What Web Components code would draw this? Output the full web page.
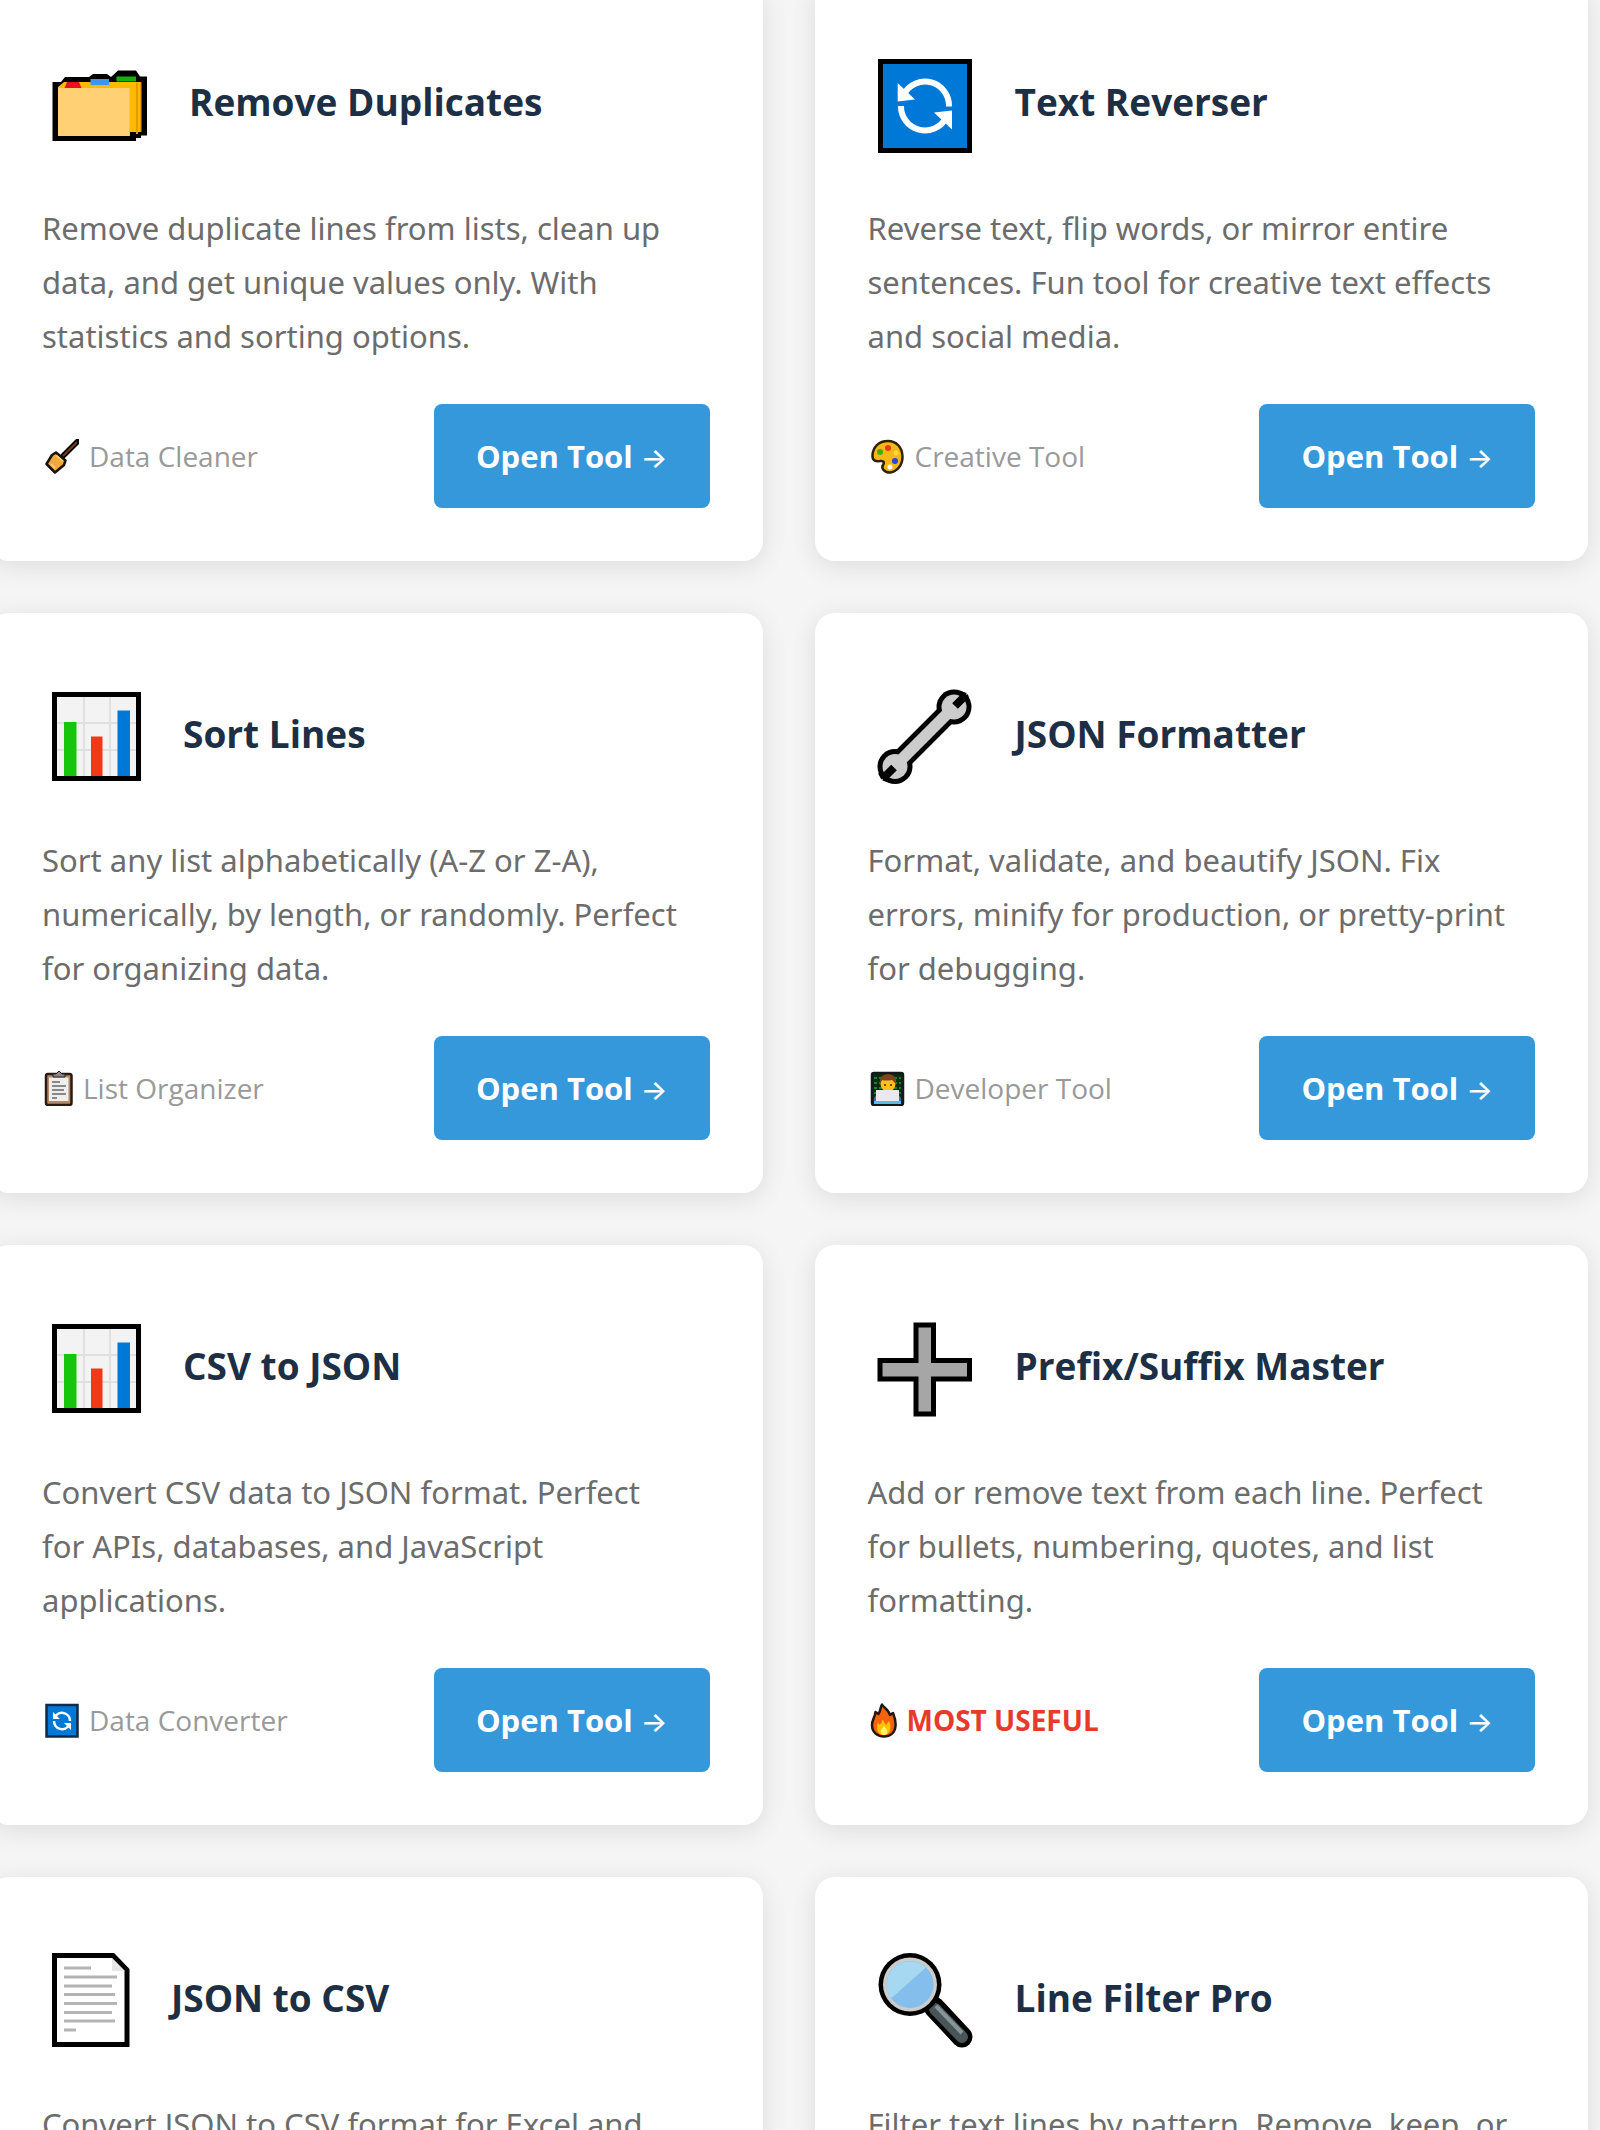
<!DOCTYPE html>
<html lang="en">
<head>
<meta charset="utf-8">
<title>Text Tools</title>
<style>
  html, body { height: 100%; margin: 0; }
  body {
    overflow: hidden;
    background: #f5f5f5;
    font-family: "Open Sans", "Noto Sans", sans-serif;
  }
</style>
</head>
<body>
<tool-grid>
  <tool-card icon="folder" href="#remove-duplicates">
    <span slot="title">Remove Duplicates</span>
    Remove duplicate lines from lists, clean up data, and get unique values only. With statistics and sorting options.
    <tool-tag slot="tag" icon="broom">Data Cleaner</tool-tag>
  </tool-card>
  <tool-card icon="refresh" href="#text-reverser">
    <span slot="title">Text Reverser</span>
    Reverse text, flip words, or mirror entire sentences. Fun tool for creative text effects and social media.
    <tool-tag slot="tag" icon="palette">Creative Tool</tool-tag>
  </tool-card>
  <tool-card icon="chart" href="#sort-lines">
    <span slot="title">Sort Lines</span>
    Sort any list alphabetically (A-Z or Z-A), numerically, by length, or randomly. Perfect for organizing data.
    <tool-tag slot="tag" icon="clipboard">List Organizer</tool-tag>
  </tool-card>
  <tool-card icon="wrench" href="#json-formatter">
    <span slot="title">JSON Formatter</span>
    Format, validate, and beautify JSON. Fix errors, minify for production, or pretty-print for debugging.
    <tool-tag slot="tag" icon="developer">Developer Tool</tool-tag>
  </tool-card>
  <tool-card icon="chart" href="#csv-to-json">
    <span slot="title">CSV to JSON</span>
    Convert CSV data to JSON format. Perfect for APIs, databases, and JavaScript applications.
    <tool-tag slot="tag" icon="refreshSmall">Data Converter</tool-tag>
  </tool-card>
  <tool-card icon="plus" href="#prefix-suffix">
    <span slot="title">Prefix/Suffix Master</span>
    Add or remove text from each line. Perfect for bullets, numbering, quotes, and list formatting.
    <tool-tag slot="tag" icon="fire" hot>MOST USEFUL</tool-tag>
  </tool-card>
  <tool-card icon="page">
    <span slot="title">JSON to CSV</span>
    Convert JSON to CSV format for Excel and
  </tool-card>
  <tool-card icon="magnifier">
    <span slot="title">Line Filter Pro</span>
    Filter text lines by pattern. Remove, keep, or
  </tool-card>
</tool-grid>

<script>
// each entry: [width, height, markup]
const icons = {
  folder: [115, 96, `
    <path d="M10.5 25H19L23 20H47L51 17H65L69 20L76 13.5H94L98 19.5H105V78.5H99V81H94V84H10.5Z" fill="#000"/>
    <path d="M22 25H99V75H88V79H16V30Z" fill="#ffb900"/>
    <path d="M94 26H96V77H94M98 25H99.500V75H98" fill="#e69a00"/>
    <path d="M16 31H87.500V79H16Z" fill="#ffd174"/>
    <path d="M25 25H37L39.500 31H22.500Z" fill="#e81224"/>
    <path d="M48.500 22H67V28H48.500Z" fill="#3a96e8"/>
    <path d="M74.500 19.500H94V24.500H74.500Z" fill="#13b10b"/>`],
  refresh: [115, 96, `
    <rect x="12.500" y="4.500" width="89" height="89" fill="#0078d7" stroke="#000" stroke-width="5"/>
    <g fill="none" stroke="#fff" stroke-width="6">
      <path d="M81 49.500A24 24 0 0 0 36 37"/><path d="M33 49A24 24 0 0 0 78 61"/>
    </g>
    <path d="M29.700 26V44.500L47 42.500ZM84 72.500V53.500L66 55.500Z" fill="#fff"/>`],
  chart: [109, 96, `
    <rect x="12.500" y="5.500" width="84" height="84" fill="#f3f3f3" stroke="#000" stroke-width="5"/>
    <path d="M42 8V87M68 8V87M15 34H94M15 61H94" stroke="#e0e0e0" stroke-width="2"/>
    <path d="M22 33H34.500V87H22Z" fill="#16c60c"/>
    <path d="M49 47.500H60.500V87H49Z" fill="#f03a17"/>
    <path d="M75.500 21.500H88V87H75.500Z" fill="#0078d7"/>`],
  wrench: [115, 96, `
    <path d="M28 76L85 19" stroke="#000" stroke-width="21"/>
    <circle cx="86" cy="18" r="17.500"/><circle cx="27" cy="77.500" r="17.500"/>
    <path d="M28 76L85 19" stroke="#ccc" stroke-width="11.500"/>
    <circle cx="86" cy="18" r="12.500" fill="#ccc"/><circle cx="27" cy="77.500" r="12.500" fill="#ccc"/>
    <path d="M87 17L98 6M26 78.500L15 89.500" stroke="#000" stroke-width="8"/>
    <path d="M98 6L92 4M98 6L100 12M15 89.500L21 91.500M15 89.500L12 83.500" stroke="#000" stroke-width="4"/>`],
  plus: [115, 96, `
    <path d="M48 4H65.500V39.500H101.500V58H65.500V93H48V58H12V39.500H48Z" fill="#a6a6a6" stroke="#000" stroke-width="5"/>`],
  page: [97, 96, `
    <path d="M12.500 2.500H71L85 17V91.500H12.500Z" fill="#fff" stroke="#000" stroke-width="5"/>
    <path d="M70 5V18H83Z" fill="#e6e6e6"/>
    <path d="M22 15H49M22 24H75M22 33H70M22 41.500H73M22 50.500H75M22 59.500H70M22 68H73M22 77H34" stroke="#b4b4b4" stroke-width="3"/>`],
  magnifier: [115, 96, `
    <path d="M66 54L94 84" stroke="#000" stroke-width="21" stroke-linecap="round"/>
    <path d="M67 56L94 84" stroke="#4a5558" stroke-width="12" stroke-linecap="round"/>
    <path d="M68 53L94 80" stroke="#859598" stroke-width="4"/>
    <circle cx="42" cy="31.500" r="31.500"/><circle cx="42" cy="31.500" r="27" fill="#ccc"/>
    <circle cx="42" cy="31.500" r="23.500" fill="#83beec"/>
    <path d="M23 45.500A23.500 23.500 0 0 1 58 14.500Z" fill="#a6d8f2"/>`],
  broom: [37, 35, `
    <path d="M36 2L21 17" stroke="#000" stroke-width="5.500" stroke-linecap="round"/>
    <path d="M35 3L21 17" stroke="#7a3b14" stroke-width="2"/>
    <path d="M14 13.500L23.500 21.500L22 26L13 33.500L4.500 25L10 16Z" fill="#f2a93b" stroke="#1a1208" stroke-width="2.500" stroke-linejoin="round"/>
    <path d="M14.500 16.500L20.500 22M9 25L13 29" stroke="#ffd27a" stroke-width="1.500"/>`],
  palette: [37, 35, `
    <path d="M20 2C28 2 34.500 8 34.500 18C34.500 26 29 33 22 33.500C16 33.500 13 29 15 26C17 23 15 21.500 12 22C8 22.500 4.500 22 4.500 17C4.500 8 11 2 20 2Z" fill="#f7b718" stroke="#2b2208" stroke-width="2.500"/>
    <circle cx="12" cy="13" r="3" fill="#3fae0a"/><circle cx="20" cy="9" r="3" fill="#e83b14"/>
    <circle cx="28" cy="14" r="2.500" fill="#ffd84a"/>
    <circle cx="27" cy="22" r="3" fill="#2549d8"/><circle cx="22" cy="28" r="2.500" fill="#fff"/>`],
  clipboard: [31, 35, `
    <rect x="4" y="3" width="25.500" height="31" rx="2" fill="#b58a68" stroke="#2a1b12" stroke-width="2.500"/>
    <rect x="7" y="6.500" width="19.500" height="23.500" fill="#eee"/>
    <path d="M11 6V3H14L17 0L20 3H23V6Z" fill="#888" stroke="#222" stroke-width="1"/>
    <path d="M10 11H18M10 15H24M10 19H22M10 23H24M10 27H15" stroke="#888" stroke-width="2"/>`],
  developer: [37, 35, `
    <rect x="4" y="2" width="31" height="32" rx="2" fill="#0b2b12" stroke="#15191b" stroke-width="2.500"/>
    <path d="M6 7H33M6 12H33M6 17H33M6 22H33" stroke="#22a03c" stroke-width="1.500" stroke-dasharray="3 2"/>
    <path d="M6 33V27Q8 22 20 22Q31 22 33 27V33Z" fill="#2677b8"/>
    <circle cx="20" cy="13" r="7.500" fill="#ffbf1f"/>
    <path d="M12 13Q11 3 20 3Q29 3 28 13L24 9Q18 10 14 9Z" fill="#7d431c"/>
    <path d="M17 13V15M23 13V15" stroke="#4a2c10" stroke-width="1.500"/>
    <path d="M8 19H31V30H8Z" fill="#e8e8ee"/><path d="M6 30H33V33H6Z" fill="#62b8e8"/>`],
  refreshSmall: [37, 35, `
    <rect x="4.500" y="2" width="31" height="31.500" fill="#0078d7" stroke="#102a47" stroke-width="2.500"/>
    <g fill="none" stroke="#fff" stroke-width="2.500">
      <path d="M28 18A8 8 0 0 0 13 14"/><path d="M12 18A8 8 0 0 0 27 22"/>
    </g>
    <path d="M11 9V16H18ZM29 27V20H22Z" fill="#fff"/>`],
  fire: [29, 35, `
    <path d="M14 1.500C16 5 21 7 22 12L25 10C27 15 28 19 27.500 23C27 30 22 33.500 16 33.500C9 33.500 4 29 4 22C4 17 7 14 7.500 9L10.500 11C13 8 12 4 14 1.500Z" fill="#f7630c" stroke="#26160d" stroke-width="2.500" stroke-linejoin="round"/>
    <path d="M10 19C11 23 13 22 14 18C15 15 16 20 18 22L21 18C24 25 22 32 16 32C9 32 8 25 10 19Z" fill="#ffc400"/>
    <path d="M13 27L16 23L19 27C20 30 18 32 16 32S12 30 13 27Z" fill="#fff36b"/>`],
};

function icon(name) {
  const [w, h, body] = icons[name];
  return `<svg width="${w}" height="${h}" viewBox="0 0 ${w} ${h}" aria-hidden="true">${body}</svg>`;
}

class ToolGrid extends HTMLElement {
  constructor() {
    super();
    this.attachShadow({ mode: 'open' }).innerHTML = `
      <style>
        :host {
          display: grid;
          grid-template-columns: repeat(2, minmax(0, 1fr));
          gap: 52px;
          margin: -19px 12px 0 -11px;
        }
      </style>
      <slot></slot>
    `;
  }
}

class ToolTag extends HTMLElement {
  connectedCallback() {
    this.attachShadow({ mode: 'open' }).innerHTML = `
      <style>
        :host {
          display: flex;
          align-items: center;
          gap: 10px;
          color: #999;
          font-size: 28px;
          white-space: nowrap;
        }
        :host([hot]) { color: #e83a2a; font-weight: 700; }
        svg { flex: none; }
      </style>
      ${icon(this.getAttribute('icon'))}
      <span><slot></slot></span>
    `;
  }
}

class ToolCard extends HTMLElement {
  connectedCallback() {
    const href = this.getAttribute('href');
    this.attachShadow({ mode: 'open' }).innerHTML = `
      <style>
        :host {
          display: block;
          padding: 53px;
          border-radius: 20px;
          background: #fff;
          box-shadow: 0 5px 26px rgba(0, 0, 0, 0.1);
        }
        header {
          display: flex;
          align-items: center;
          gap: 32px;
          padding: 23px 0 21px;
          margin-bottom: 27px;
        }
        svg { flex: none; }
        h3 {
          margin: 0;
          padding-bottom: 6px;
          color: #1d2f44;
          font-size: 37px;
          font-weight: 700;
          line-height: 48px;
        }
        p {
          margin: 0;
          padding-right: 24px;
          color: #6c6c6c;
          font-family: "Noto Sans", "Open Sans", sans-serif;
          font-size: 31px;
          line-height: 54px;
        }
        footer {
          display: flex;
          align-items: center;
          justify-content: space-between;
          margin-top: 41px;
        }
        a {
          padding: 28px 42px;
          border-radius: 8px;
          background: #3498db;
          color: #fff;
          font-size: 31px;
          font-weight: 700;
          line-height: 48px;
          text-decoration: none;
          white-space: nowrap;
        }
        .arrow {
          font-family: Inter, sans-serif;
          font-size: 28px;
          font-weight: 500;
          line-height: 1;
        }
      </style>
      <header>
        ${icon(this.getAttribute('icon'))}
        <h3><slot name="title"></slot></h3>
      </header>
      <p><slot></slot></p>
      ${href ? `<footer><slot name="tag"></slot><a href="${href}">Open Tool <span class="arrow">→</span></a></footer>` : ''}
    `;
  }
}

customElements.define('tool-grid', ToolGrid);
customElements.define('tool-tag', ToolTag);
customElements.define('tool-card', ToolCard);
</script>
</body>
</html>
